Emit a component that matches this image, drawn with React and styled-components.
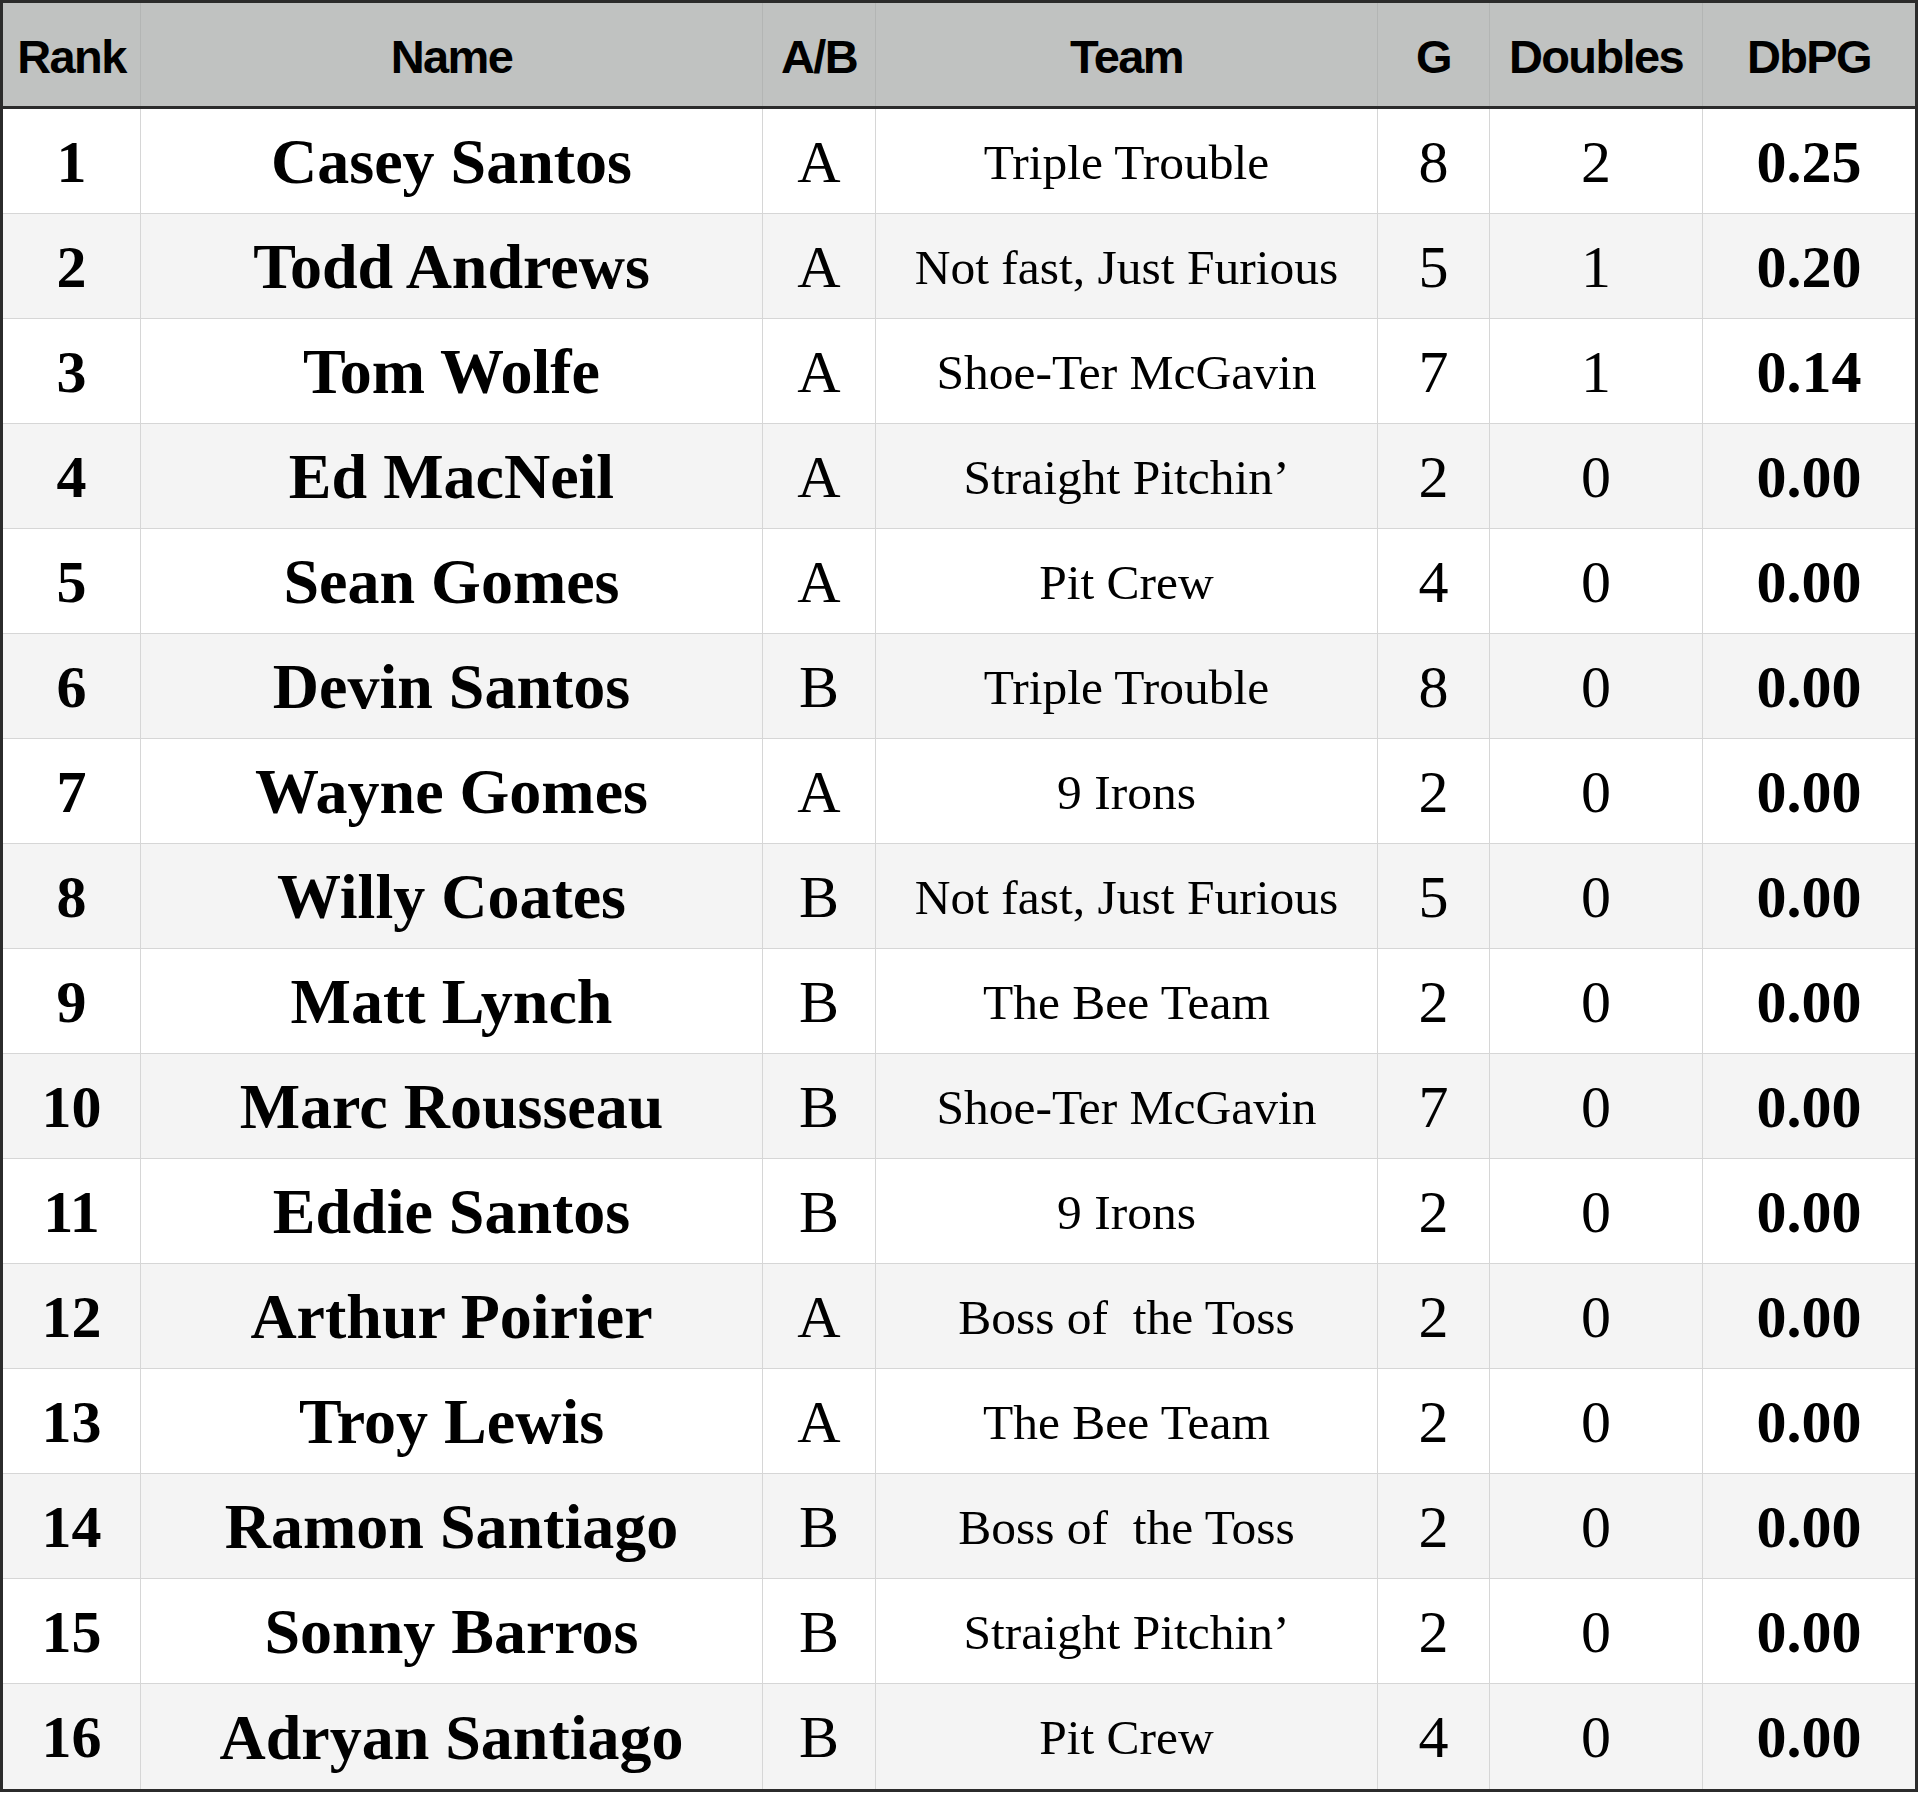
import React from 'react';
import styled, { createGlobalStyle } from 'styled-components';

const GlobalStyle = createGlobalStyle`
  html, body {
    margin: 0;
    padding: 0;
    background: #ffffff;
  }
`;

const COLS = '138px 622px 113px 502px 112px 213px 212px';

const Table = styled.div`
  width: 1912px;
  border: 3px solid #2b2b2b;
  background: #ffffff;
`;

const HeaderRow = styled.div`
  display: grid;
  grid-template-columns: ${COLS};
  height: 106px;
  background: #c0c2c1;
  border-bottom: 3px solid #2b2b2b;
  box-sizing: border-box;
`;

const HeadCell = styled.div`
  display: flex;
  align-items: center;
  justify-content: center;
  font-family: 'Liberation Sans', Arial, sans-serif;
  font-weight: 700;
  font-size: 47px;
  letter-spacing: -1.6px;
  color: #000;
  border-right: ${p => (p.last ? 'none' : '1px solid #b3b5b4')};
  padding-top: 3px;
`;

const Row = styled.div`
  display: grid;
  grid-template-columns: ${COLS};
  height: 105px;
  box-sizing: border-box;
  background: ${p => (p.alt ? '#f4f4f4' : '#ffffff')};
  border-bottom: ${p => (p.last ? 'none' : '1px solid #d6d6d6')};
`;

const Cell = styled.div`
  display: flex;
  align-items: center;
  justify-content: center;
  font-family: 'Liberation Serif', 'Times New Roman', serif;
  font-weight: ${p => (p.bold ? 700 : 400)};
  font-size: ${p => p.size || 60}px;
  color: #000;
  white-space: pre;
  border-right: ${p => (p.last ? 'none' : '1px solid #d6d6d6')};
  padding-top: 2px;
`;

const players = [
  [1, 'Casey Santos', 'A', 'Triple Trouble', 8, 2, '0.25'],
  [2, 'Todd Andrews', 'A', 'Not fast, Just Furious', 5, 1, '0.20'],
  [3, 'Tom Wolfe', 'A', 'Shoe-Ter McGavin', 7, 1, '0.14'],
  [4, 'Ed MacNeil', 'A', 'Straight Pitchin\u2019', 2, 0, '0.00'],
  [5, 'Sean Gomes', 'A', 'Pit Crew', 4, 0, '0.00'],
  [6, 'Devin Santos', 'B', 'Triple Trouble', 8, 0, '0.00'],
  [7, 'Wayne Gomes', 'A', '9 Irons', 2, 0, '0.00'],
  [8, 'Willy Coates', 'B', 'Not fast, Just Furious', 5, 0, '0.00'],
  [9, 'Matt Lynch', 'B', 'The Bee Team', 2, 0, '0.00'],
  [10, 'Marc Rousseau', 'B', 'Shoe-Ter McGavin', 7, 0, '0.00'],
  [11, 'Eddie Santos', 'B', '9 Irons', 2, 0, '0.00'],
  [12, 'Arthur Poirier', 'A', 'Boss of  the Toss', 2, 0, '0.00'],
  [13, 'Troy Lewis', 'A', 'The Bee Team', 2, 0, '0.00'],
  [14, 'Ramon Santiago', 'B', 'Boss of  the Toss', 2, 0, '0.00'],
  [15, 'Sonny Barros', 'B', 'Straight Pitchin\u2019', 2, 0, '0.00'],
  [16, 'Adryan Santiago', 'B', 'Pit Crew', 4, 0, '0.00'],
];

const headers = ['Rank', 'Name', 'A/B', 'Team', 'G', 'Doubles', 'DbPG'];

export default function App() {
  return (
    <>
      <GlobalStyle />
      <Table>
        <HeaderRow>
          {headers.map((h, i) => (
            <HeadCell key={h} last={i === headers.length - 1}>
              {h}
            </HeadCell>
          ))}
        </HeaderRow>
        {players.map(([rank, name, ab, team, g, dbl, dbpg], i) => (
          <Row key={rank} alt={i % 2 === 1} last={i === players.length - 1}>
            <Cell bold size={60}>{rank}</Cell>
            <Cell bold size={64}>{name}</Cell>
            <Cell size={60}>{ab}</Cell>
            <Cell size={49.5}>{team}</Cell>
            <Cell size={60}>{g}</Cell>
            <Cell size={60}>{dbl}</Cell>
            <Cell bold size={60} last>{dbpg}</Cell>
          </Row>
        ))}
      </Table>
    </>
  );
}
